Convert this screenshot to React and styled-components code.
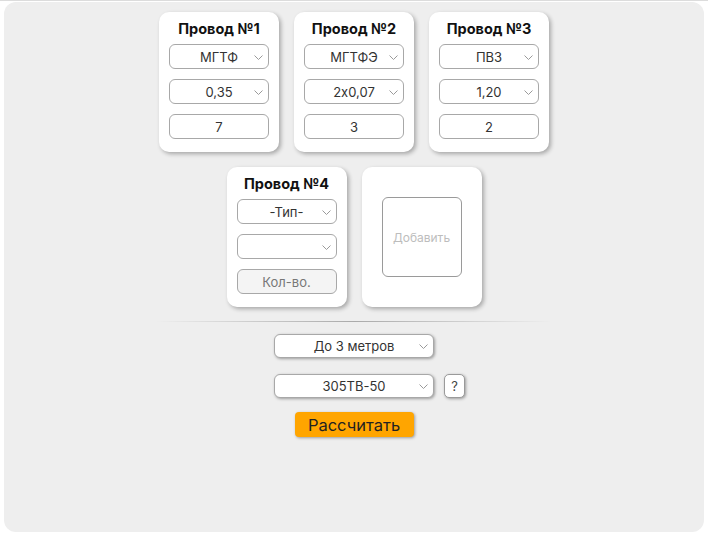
import React from 'react'
import styled, { createGlobalStyle } from 'styled-components'

const GlobalStyle = createGlobalStyle`
  html, body {
    margin: 0;
    padding: 0;
    background: #fff;
  }
  body {
    font-family: Inter, "Noto Sans", sans-serif;
    font-feature-settings: "calt" 0;
    color: #222;
  }
`

const Page = styled.div`
  border-top: 1px solid #dcdcdc;
  padding: 1px 4px 5px;
`

const Panel = styled.div`
  height: 530px;
  box-sizing: border-box;
  background: #eeeeee;
  border-radius: 12px;
  padding-top: 10px;
  display: flex;
  flex-direction: column;
  align-items: center;
`

const CardRow = styled.div`
  display: flex;
  justify-content: center;
  gap: 15px;
  margin-bottom: ${p => p.$mb || 0}px;
`

const Card = styled.div`
  width: 120px;
  height: 140px;
  box-sizing: border-box;
  background: #fff;
  border-radius: 10px;
  box-shadow: 2px 2px 4px rgba(0, 0, 0, 0.3);
  padding: 8px 10px 0;
  display: flex;
  flex-direction: column;
  align-items: stretch;
  gap: 10px;
`

const AddCard = styled(Card)`
  align-items: center;
  justify-content: center;
  padding: 0;
`

const AddBox = styled.button`
  width: 80px;
  height: 80px;
  background: #fff;
  border: 1px solid #9a9a9a;
  border-radius: 6px;
  color: #bdbdbd;
  font-family: inherit;
  font-size: 12px;
  padding: 0;
`

const Title = styled.div`
  font-weight: 700;
  font-size: 14.5px;
  text-align: center;
  line-height: 17px;
  margin-bottom: -3px;
  color: #111;
`

const SelectWrap = styled.div`
  position: relative;
  width: ${p => p.$w || '100%'};
`

const Select = styled.select`
  appearance: none;
  width: 100%;
  height: ${p => p.$h || 25}px;
  box-sizing: border-box;
  border: 1px solid #a8a8a8;
  border-radius: 6px;
  background: #fff;
  font-family: inherit;
  font-feature-settings: "calt" 0;
  font-size: 13px;
  color: #333;
  text-align: center;
  text-align-last: center;
  padding: 0 4px;
  box-shadow: ${p => (p.$shadow ? '1px 1px 3px rgba(0,0,0,0.35)' : 'none')};
  outline: none;
`

const Chevron = styled.svg`
  position: absolute;
  right: 6px;
  top: 50%;
  margin-top: -2px;
  width: 9px;
  height: 5px;
  pointer-events: none;
`

const Qty = styled.input`
  width: 100%;
  height: 25px;
  box-sizing: border-box;
  border: 1px solid #a8a8a8;
  border-radius: 6px;
  background: ${p => (p.disabled ? '#f4f4f4' : '#fff')};
  font-family: inherit;
  font-size: 13px;
  color: #333;
  text-align: center;
  outline: none;
  &::placeholder {
    color: #777;
  }
`

const Divider = styled.div`
  width: 396px;
  height: 1px;
  margin: 14px 0 12px;
  background: linear-gradient(to right, rgba(170,170,170,0), #aaa 50%, rgba(170,170,170,0));
`

const OptRow = styled.div`
  display: grid;
  grid-template-columns: 1fr 160px 1fr;
  column-gap: 10px;
  width: 100%;
  align-items: center;
  margin-bottom: ${p => p.$mb || 0}px;
`

const Center = styled.div`
  grid-column: 2;
`

const HelpButton = styled.button`
  grid-column: 3;
  justify-self: start;
  width: 21px;
  height: 24px;
  padding: 0;
  background: #fff;
  border: 1px solid #9a9a9a;
  border-radius: 5px;
  box-shadow: 1px 1px 3px rgba(0, 0, 0, 0.35);
  font-family: inherit;
  font-size: 13px;
  color: #444;
`

const CalcButton = styled.button`
  width: 119px;
  height: 25px;
  padding: 0;
  background: #ffa500;
  border: none;
  border-radius: 4px;
  box-shadow: 1px 1px 3px rgba(0, 0, 0, 0.35);
  font-family: inherit;
  font-size: 16.5px;
  color: #222;
`

function Dropdown({ value, options = [], w, h, shadow }) {
  return (
    <SelectWrap $w={w}>
      <Select defaultValue={value} $h={h} $shadow={shadow}>
        {options.map(o => (
          <option key={o} value={o}>{o}</option>
        ))}
      </Select>
      <Chevron viewBox="0 0 9 5">
        <path d="M0.5 0.5 L4.5 4.5 L8.5 0.5" fill="none" stroke="#9a9a9a" strokeWidth="1" />
      </Chevron>
    </SelectWrap>
  )
}

const wires = [
  { n: 1, type: 'МГТФ', section: '0,35', qty: '7' },
  { n: 2, type: 'МГТФЭ', section: '2x0,07', qty: '3' },
  { n: 3, type: 'ПВ3', section: '1,20', qty: '2' },
]

function WireCard({ n, type, section, qty }) {
  return (
    <Card>
      <Title>Провод №{n}</Title>
      <Dropdown value={type} options={[type]} />
      <Dropdown value={section} options={[section]} />
      <Qty defaultValue={qty} />
    </Card>
  )
}

export default function App() {
  return (
    <Page>
      <GlobalStyle />
      <Panel>
        <CardRow $mb={15}>
          {wires.map(w => (
            <WireCard key={w.n} {...w} />
          ))}
        </CardRow>
        <CardRow>
          <Card>
            <Title>Провод №4</Title>
            <Dropdown value="-Тип-" options={['-Тип-']} />
            <Dropdown value="" options={['']} />
            <Qty placeholder="Кол-во." disabled />
          </Card>
          <AddCard>
            <AddBox>Добавить</AddBox>
          </AddCard>
        </CardRow>
        <Divider />
        <OptRow $mb={16}>
          <Center>
            <Dropdown value="До 3 метров" options={['До 3 метров']} h={24} shadow />
          </Center>
        </OptRow>
        <OptRow $mb={14}>
          <Center>
            <Dropdown value="305TB-50" options={['305TB-50']} h={24} shadow />
          </Center>
          <HelpButton>?</HelpButton>
        </OptRow>
        <CalcButton>Рассчитать</CalcButton>
      </Panel>
    </Page>
  )
}
